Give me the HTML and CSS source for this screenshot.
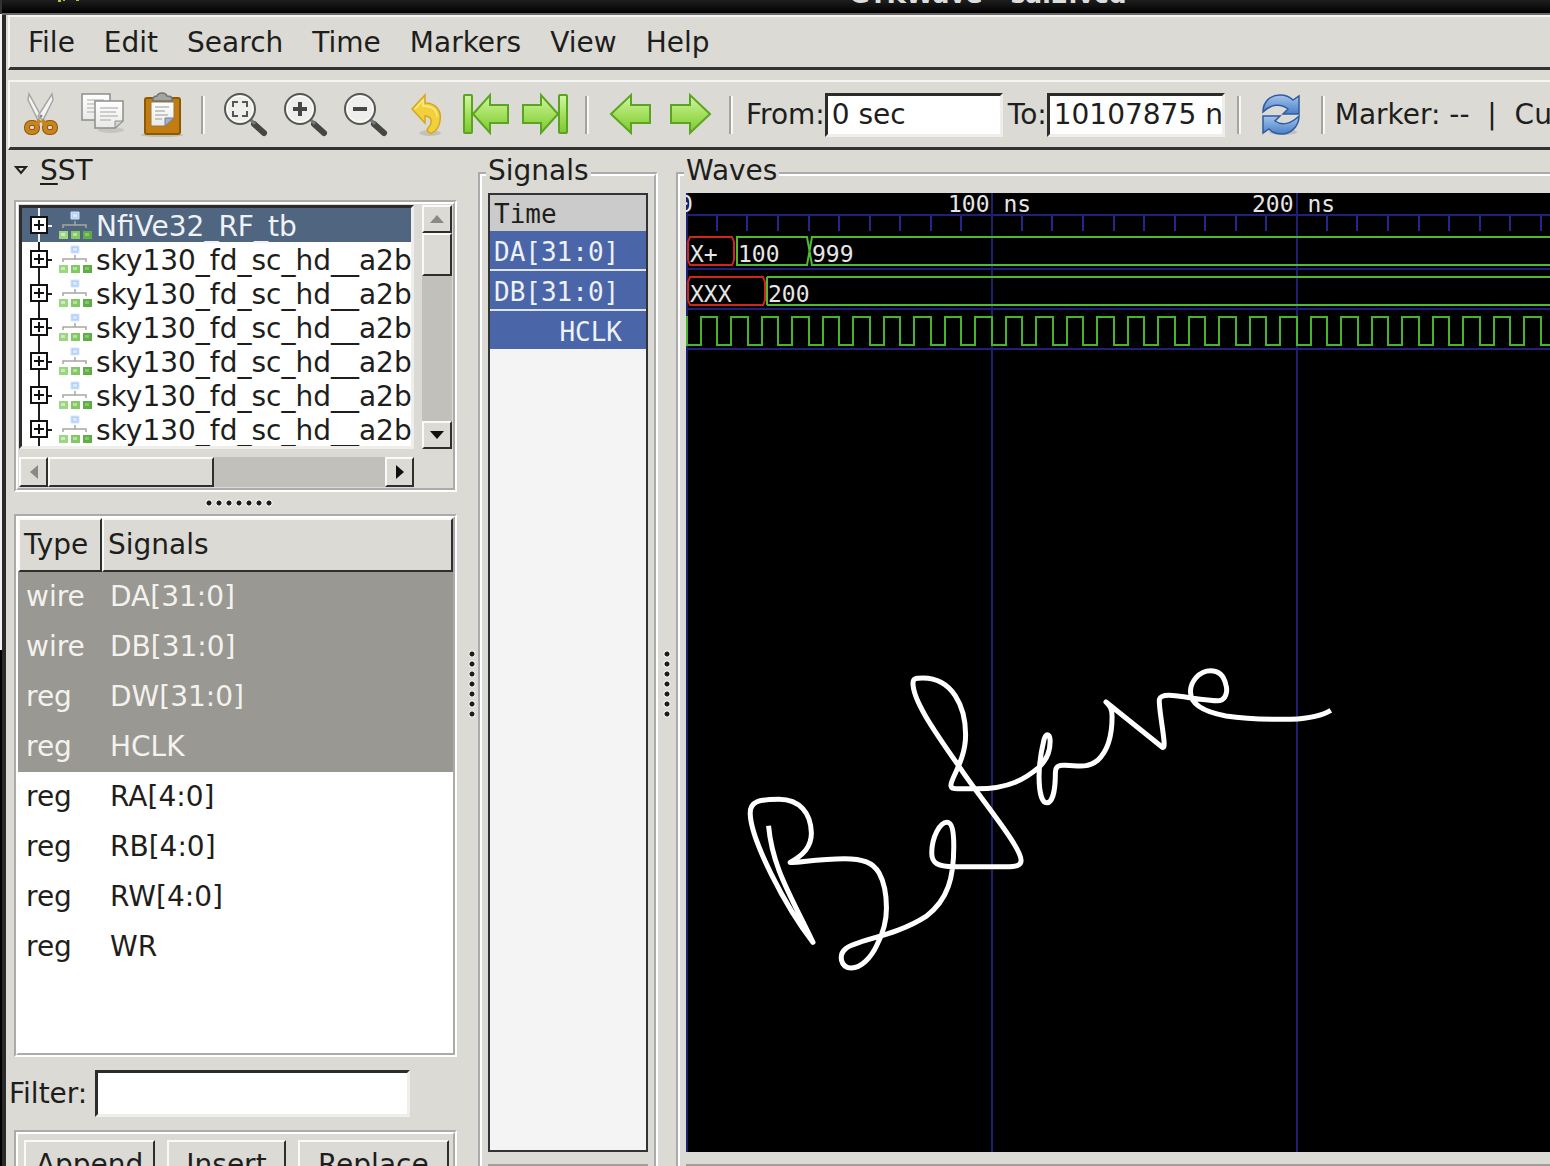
FILE: index.html
```html
<!DOCTYPE html>
<html lang="en">
<head>
<meta charset="utf-8">
<title>GTKWave - sal2.vcd</title>
<link rel="stylesheet" href="styles.css">
</head>
<body>
<svg class="defs" aria-hidden="true">
  <defs>
    <linearGradient id="green" x1="0" y1="0" x2="0" y2="1"><stop offset="0" stop-color="#d3f5a8"/><stop offset=".5" stop-color="#a5e05f"/><stop offset="1" stop-color="#7cc832"/></linearGradient>
    <linearGradient id="blue" x1="0" y1="0" x2="0" y2="1"><stop offset="0" stop-color="#a3c4ec"/><stop offset="1" stop-color="#4a80c8"/></linearGradient>
    <linearGradient id="paper" x1="0" y1="0" x2="0" y2="1"><stop offset="0" stop-color="#ffffff"/><stop offset="1" stop-color="#e9e9e7"/></linearGradient>
    <symbol id="node" viewBox="0 0 34 28">
      <path d="M13 1h8v7h-8z" fill="#b4d2f8" stroke="#d4e4fa"/>
      <path d="M15 3h4v3h-4z" fill="#d8e9ff"/>
      <path d="M5 17v-3h23v3M17 10v4" fill="none" stroke="#a9a6a0" stroke-width="1.500"/>
      <path d="M1 20h9v8H1z" fill="#9bd680"/><path d="M3 22h4v3H3z" fill="#c9edb8"/>
      <path d="M13 20h9v8h-9z" fill="#83c767"/><path d="M15 22h4v3h-4z" fill="#b4e39c"/>
      <path d="M25 20h9v8h-9z" fill="#5fae45"/><path d="M27 22h4v3h-4z" fill="#85c76b"/>
    </symbol>
    <symbol id="plus" viewBox="0 0 24 34">
      <path d="M10 0v34M18 18h5" stroke="currentColor" stroke-width="2"/>
      <path d="M2 9h16v16H2z" fill="#fff" stroke="#111" stroke-width="2"/>
      <path d="M5 17h10M10 12v10" stroke="#111" stroke-width="2"/>
    </symbol>
    <symbol id="lens" viewBox="0 0 48 48">
      <path d="M33 33l10 9" stroke="#454745" stroke-width="6" stroke-linecap="round"/>
      <path d="M29 28l5 5" stroke="#777" stroke-width="3"/>
      <circle cx="19" cy="18" r="15" fill="#eeeeec" stroke="#555753" stroke-width="2"/>
      <circle cx="19" cy="18" r="13" fill="none" stroke="#fff" stroke-width="1"/>
    </symbol>
  </defs>
</svg>
<div class="screen">
  <div class="desktop"></div>
  <div class="window">
    <header class="titlebar">
      <svg class="titleicon" width="24" height="3" aria-hidden="true"><path d="M0 0h3v2H0zM5 0h2v1H5zM18 0h3v1h-3z" fill="#a8c83c"/></svg>
      <span class="title">GTKWave - sal2.vcd</span>
    </header>
    <nav class="menubar" aria-label="Menu">
      <button>File</button><button>Edit</button><button>Search</button><button>Time</button><button>Markers</button><button>View</button><button>Help</button>
    </nav>
    <div class="toolbar">
      <button class="tool" aria-label="Cut"><svg width="48" height="48" viewBox="0 0 48 48"><path d="M12 3l-1 6 10 20 3-4z" fill="#f4f4f3" stroke="#a5a6a3" stroke-width="1.500"/><path d="M35 3l1 6-10 20-5-4z" fill="#f4f4f3" stroke="#a5a6a3" stroke-width="1.500"/><circle cx="24" cy="25" r="1.500" fill="#888"/><g fill="none" stroke="#8f5902" stroke-width="6"><rect x="10" y="32" width="10" height="9" rx="4"/><rect x="28" y="32" width="10" height="9" rx="4"/></g><g fill="none" stroke="#c88420" stroke-width="4"><path d="M19 34l4-5M29 34l-4-5"/><rect x="10" y="32" width="10" height="9" rx="4"/><rect x="28" y="32" width="10" height="9" rx="4"/></g></svg></button>
      <button class="tool" aria-label="Copy"><svg width="48" height="48" viewBox="0 0 48 48"><ellipse cx="34" cy="39" rx="13" ry="3" fill="#c6c5c0"/><path d="M5 3h28v26H5z" fill="url(#paper)" stroke="#8d8f8b" stroke-width="1.500"/><path d="M10 9h17M10 13h8M10 17h7M10 21h8" stroke="#c4c5c3" stroke-width="1.500"/><path d="M18 10h28v20l-8 7H18z" fill="url(#paper)" stroke="#8d8f8b" stroke-width="1.500"/><path d="M46 30l-8 7v-7z" fill="#d3d4d2" stroke="#8d8f8b"/><path d="M23 17h18M23 21h16M23 25h18M23 29h11" stroke="#bfc0be" stroke-width="1.500"/></svg></button>
      <button class="tool" aria-label="Paste"><svg width="48" height="48" viewBox="0 0 48 48"><ellipse cx="25" cy="44" rx="21" ry="2" fill="#bdbcb6"/><rect x="8" y="7" width="35" height="36" rx="2" fill="#c17d11" stroke="#8f5902" stroke-width="2"/><path d="M14 11h23v16l-9 8H14z" fill="url(#paper)" stroke="#9a7a40"/><path d="M37 27l-9 8v-8z" fill="#9fb0c8" stroke="#77808c"/><path d="M18 16h14M18 20h10M18 24h13M18 28h7" stroke="#b7b8b6" stroke-width="1.500"/><path d="M16 10V7q1-2 4-2 1-3 5-3t5 3q4 0 5 2v3z" fill="#a3a5a1" stroke="#72746f" stroke-width="1.500"/></svg></button>
      <span class="sep"></span>
      <button class="tool" aria-label="Zoom fit"><svg width="48" height="48"><use href="#lens"/><path d="M12 16v-5h5M21 11h5v5M26 20v5h-5M17 25h-5v-5" fill="none" stroke="#555753" stroke-width="2"/></svg></button>
      <button class="tool" aria-label="Zoom in"><svg width="48" height="48"><use href="#lens"/><path d="M12 18h14M19 11v14" stroke="#454745" stroke-width="4"/></svg></button>
      <button class="tool" aria-label="Zoom out"><svg width="48" height="48"><use href="#lens"/><path d="M12 18h14" stroke="#454745" stroke-width="4"/></svg></button>
      <button class="tool" aria-label="Undo"><svg width="48" height="48" viewBox="0 0 48 48"><ellipse cx="29" cy="42" rx="11" ry="3" fill="#c2c1ba"/><path d="M11 18L24 4v8c11 0 17 8 15 18-1 7-4 10-8 12-3 1-6-3-4-5 5-5 4-12-3-12v7z" fill="#f1d03c" stroke="#d3a820" stroke-width="1.500"/><path d="M14 18l8-9v6c9 0 14 4 14 11" fill="none" stroke="#fbeb8c" stroke-width="1.500"/></svg></button>
      <button class="tool" aria-label="Zoom to start"><svg width="48" height="48" viewBox="0 0 48 48"><g fill="url(#green)" stroke="#5aa51e" stroke-width="2"><rect x="3" y="4" width="8" height="38" rx="1"/><path d="M12 23L29 4v10h18v18H29v10z"/></g></svg></button>
      <button class="tool" aria-label="Zoom to end"><svg width="48" height="48" viewBox="0 0 48 48"><g fill="url(#green)" stroke="#5aa51e" stroke-width="2"><rect x="38" y="4" width="8" height="38" rx="1"/><path d="M37 23L20 4v10H2v18h18v10z"/></g></svg></button>
      <span class="sep"></span>
      <button class="tool" aria-label="Previous edge"><svg width="48" height="48" viewBox="0 0 48 48"><path d="M6 23L26 4v10h19v18H26v10z" fill="url(#green)" stroke="#5aa51e" stroke-width="2"/></svg></button>
      <button class="tool" aria-label="Next edge"><svg width="48" height="48" viewBox="0 0 48 48"><path d="M45 23L25 4v10H6v18h19v10z" fill="url(#green)" stroke="#5aa51e" stroke-width="2"/></svg></button>
      <span class="sep"></span>
      <label class="range" for="from">From:</label>
      <input class="entry time" id="from" type="text" value="0 sec">
      <label class="range to" for="to">To:</label>
      <input class="entry time" id="to" type="text" value="10107875 ns">
      <span class="sep reload"></span>
      <button class="tool" aria-label="Reload"><svg width="48" height="48" viewBox="0 0 48 48"><ellipse cx="26" cy="41" rx="14" ry="3" fill="#bfbeba"/><g fill="url(#blue)" stroke="#2f5c9e" stroke-width="1.500"><path d="M6 21C6 10 14 4 23 4c6 0 10 2 13 5l6-4v18H26l5-5c-7-6-17-5-25 3z"/><path d="M42 25c0 11-9 18-17 18-6 0-10-2-13-5l-6 4V25h17l-5 5c7 5 16 3 24-5z"/></g></svg></button>
      <span class="sep"></span>
      <span class="status">Marker: --  |  Cursor:</span>
    </div>
    <main class="panes">
      <section class="side">
        <button class="expander"><svg width="14" height="10" viewBox="0 0 14 10" aria-hidden="true"><path d="M2 1h10L7 7z" fill="none" stroke="#222" stroke-width="2"/></svg><span><u>S</u>ST</span></button>
        <div class="box sst">
          <ul class="tree">
            <li class="on"><svg class="tog" width="24" height="34"><use href="#plus"/></svg><svg width="34" height="28"><use href="#node"/></svg><span>NfiVe32_RF_tb</span></li>
            <li><svg class="tog" width="24" height="34"><use href="#plus"/></svg><svg width="34" height="28"><use href="#node"/></svg><span>sky130_fd_sc_hd__a2b</span></li>
            <li><svg class="tog" width="24" height="34"><use href="#plus"/></svg><svg width="34" height="28"><use href="#node"/></svg><span>sky130_fd_sc_hd__a2b</span></li>
            <li><svg class="tog" width="24" height="34"><use href="#plus"/></svg><svg width="34" height="28"><use href="#node"/></svg><span>sky130_fd_sc_hd__a2b</span></li>
            <li><svg class="tog" width="24" height="34"><use href="#plus"/></svg><svg width="34" height="28"><use href="#node"/></svg><span>sky130_fd_sc_hd__a2b</span></li>
            <li><svg class="tog" width="24" height="34"><use href="#plus"/></svg><svg width="34" height="28"><use href="#node"/></svg><span>sky130_fd_sc_hd__a2b</span></li>
            <li><svg class="tog" width="24" height="34"><use href="#plus"/></svg><svg width="34" height="28"><use href="#node"/></svg><span>sky130_fd_sc_hd__a2b</span></li>
          </ul>
          <div class="scroll vert">
            <button class="bevel" aria-label="Scroll up"><svg width="14" height="10"><path d="M0 9h14L7 1z" fill="#8a8984"/></svg></button>
            <div class="bevel thumb"></div><div class="track"></div>
            <button class="bevel" aria-label="Scroll down"><svg width="14" height="10"><path d="M0 1h14L7 9z" fill="#111"/></svg></button>
          </div>
          <div class="scroll horiz">
            <button class="bevel" aria-label="Scroll left"><svg width="10" height="14"><path d="M9 0v14L1 7z" fill="#8a8984"/></svg></button>
            <div class="bevel thumb"></div><div class="track"></div>
            <button class="bevel" aria-label="Scroll right"><svg width="10" height="14"><path d="M1 0v14l8-7z" fill="#111"/></svg></button>
          </div>
        </div>
        <div class="handle across"></div>
        <div class="box list">
          <table>
            <thead><tr><th class="type">Type</th><th>Signals</th></tr></thead>
            <tbody>
              <tr class="on"><td>wire</td><td>DA[31:0]</td></tr>
              <tr class="on"><td>wire</td><td>DB[31:0]</td></tr>
              <tr class="on"><td>reg</td><td>DW[31:0]</td></tr>
              <tr class="on"><td>reg</td><td>HCLK</td></tr>
              <tr><td>reg</td><td>RA[4:0]</td></tr>
              <tr><td>reg</td><td>RB[4:0]</td></tr>
              <tr><td>reg</td><td>RW[4:0]</td></tr>
              <tr><td>reg</td><td>WR</td></tr>
            </tbody>
          </table>
        </div>
        <div class="filter"><label for="filter">Filter:</label><input class="entry" id="filter" type="text"></div>
        <div class="box actions"><button class="bevel">Append</button><button class="bevel">Insert</button><button class="bevel">Replace</button></div>
      </section>
      <div class="handle down"></div>
      <fieldset class="pane">
        <legend>Signals</legend>
        <div class="names">
          <div class="head">Time</div><div class="sig">DA[31:0]</div><div class="sig">DB[31:0]</div><div class="sig last">HCLK</div>
        </div>
        <div class="stub"></div>
      </fieldset>
      <div class="handle down"></div>
      <fieldset class="pane waves">
        <legend>Waves</legend>
        <svg class="plot" role="img" aria-label="Waveforms with a handwritten note: Before">
          <defs>
            <pattern id="grid" width="305" height="2000" patternUnits="userSpaceOnUse"><path d="M0 0h2v2000H0z" fill="#1f1f72"/></pattern>
            <pattern id="ticks" width="305" height="60" patternUnits="userSpaceOnUse"><path d="M31 23v15M61 23v15M92 23v15M123 23v15M153 23v15M184 23v15M214 23v15M245 23v15M275 23v15" stroke="#25258a" stroke-width="2"/></pattern>
            <pattern id="clock" x="0" y="120" width="61" height="40" patternUnits="userSpaceOnUse"><path d="M1 3v29h14V4h16v28h14V4h16" fill="none" stroke="#47b52b" stroke-width="2"/></pattern>
          </defs>
          <rect width="100%" height="100%" fill="#000"/>
          <rect y="0" width="100%" height="60" fill="url(#ticks)"/>
          <g fill="#20207c"><rect y="21" width="100%" height="2"/><rect y="75" width="100%" height="2"/><rect y="115" width="100%" height="2"/><rect y="155" width="100%" height="2"/></g>
          <rect width="100%" height="100%" fill="url(#grid)"/>
          <rect y="120" width="100%" height="35" fill="url(#clock)"/>
          <g fill="none" stroke-width="2">
            <path d="M46 44H4L2 49v18l2 5h42l2-5V49zM77 84H4l-2 5v18l2 5h73l2-5V89z" stroke="#cf261c"/>
            <path d="M51 43v30M51 44h70l5 28M51 72h70l5-28" stroke="#4cbb2f"/>
          </g>
          <g fill="#4cbb2f"><rect x="125" y="43" width="100%" height="2"/><rect x="125" y="71" width="100%" height="2"/><rect x="81" y="83" width="100%" height="2"/><rect x="81" y="111" width="100%" height="2"/><rect x="80" y="84" width="2" height="28"/></g>
          <g class="vals">
            <text x="-7" y="19">0</text><text x="262" y="19">100 ns</text><text x="566" y="19">200 ns</text>
            <text x="4" y="69">X+</text><text x="52" y="69">100</text><text x="126" y="69">999</text>
            <text x="4" y="109">XXX</text><text x="82" y="109">200</text>
          </g>
          <path class="ink" transform="translate(34 447) scale(.408 .333)" d="M119 558C128 680 170 760 228 908C160 800 75 600 74 520C74 485 95 478 145 478C195 478 223 520 224 580C224 620 205 645 172 668C178 672 240 657 305 657C350 657 375 668 390 700C408 740 408 790 408 805C408 840 400 880 385 915C370 955 345 985 322 985C295 985 290 945 308 927C335 900 430 890 505 830C560 780 573 710 573 620C573 570 568 547 556 547C540 547 519 590 519 640C519 668 530 681 575 681L700 681C725 681 738 678 738 662C738 620 640 480 585 378C520 265 473 180 473 130C473 115 480 114 497 114C570 114 602 200 602 285C602 360 566 415 566 436C566 447 572 447 600 447L630 447C710 447 750 415 780 384C800 362 810 330 809 300C808 278 798 280 794 300C788 330 782 370 782 410C782 460 790 489 801 489C815 489 822 450 822 400C822 380 828 375 845 376C885 380 905 382 925 362C950 335 961 285 961 230C961 205 955 197 946 186L1085 323C1092 325 1087 290 1085 270C1080 225 1075 190 1077 178C1082 160 1110 165 1155 174C1190 180 1215 184 1225 182C1242 177 1244 150 1240 135C1235 105 1220 92 1202 92C1175 92 1153 125 1153 155C1153 190 1180 215 1240 228C1300 239 1350 239 1400 238C1445 235 1475 228 1497 211"/>
        </svg>
        <div class="stub"></div>
      </fieldset>
    </main>
  </div>
</div>
</body>
</html>
```
FILE: styles.css
```css
* { box-sizing: border-box; }
body {
  margin: 0;
  height: 100vh;
  overflow: hidden;
  background: #000;
  color: #1e1e1c;
  font: 28px/34px "DejaVu Sans", sans-serif;
}
button, input { font: inherit; color: inherit; }
button { padding: 0; border: 0; background: none; }
svg { display: block; flex: none; }
.defs { position: absolute; width: 0; height: 0; }

/* the window runs past the lower edge of the screen */
.screen { display: flex; height: calc(100vh + 40px); }
.desktop { width: 2px; background: linear-gradient(#333 14px, #f2f2f2 14px 650px, #000 650px); }
.window {
  flex: 1;
  min-width: 0;
  display: flex;
  flex-direction: column;
  border-left: 4px solid #2a2a2a;
  padding-left: 2px;
  background: #dbdad5;
}

.titlebar {
  flex: none;
  display: grid;
  grid-template: 13px / 1fr auto 1fr;
  align-items: end;
  height: 15px;
  margin-left: -6px;
  padding-left: 424px;
  overflow: hidden;
  border-bottom: 2px solid #6a6a68;
  background: linear-gradient(#1e1e1e, #000);
  color: #ddd;
  font-size: 25px;
  font-weight: bold;
  line-height: 36px;
}
.titleicon { align-self: start; margin-left: -368px; }

.menubar, .toolbar {
  flex: none;
  display: flex;
  align-items: center;
  border-top: 2px solid #f6f5f3;
  border-left: 2px solid #f6f5f3;
  border-bottom: 3px solid #333;
  overflow: hidden;
}
.menubar { height: 55px; padding: 1px 0 0 4px; gap: 1px; }
.menubar button { padding: 0 14px; }
.toolbar { height: 70px; margin-top: 10px; padding-left: 1px; }
.toolbar > * { flex: none; }
.tool { width: 60px; display: grid; place-items: center; }
.sep { width: 24px; height: 38px; display: flex; justify-content: center; }
.sep::before { content: ""; border-left: 2px solid #a5a49f; border-right: 2px solid #f8f7f5; }
.reload { margin-left: 2px; }
.range { padding-left: 3px; }
.to { padding-left: 5px; }
.entry {
  min-width: 0;
  border: 3px solid;
  border-color: #2c2c2a #efeeeb #efeeeb #2c2c2a;
  border-radius: 0;
  background: #fff;
  padding: 0 0 0 4px;
  outline: 0;
}
.time { width: 178px; height: 44px; }
.status { white-space: pre; }

.panes {
  flex: 1;
  min-height: 0;
  display: grid;
  grid-template-columns: 458px 12px 180px 18px minmax(0, 1fr);
  padding-top: 4px;
}
.side { display: flex; flex-direction: column; min-height: 0; padding: 0 9px 0 6px; }
.expander { display: flex; align-items: center; gap: 12px; height: 34px; margin-bottom: 12px; }
.expander u { text-decoration-thickness: 2px; text-underline-offset: 3px; }
.box { border: 4px groove #fff; }
.sst {
  display: grid;
  grid-template: 244px 30px / minmax(0, 1fr) 30px;
  gap: 8px;
  padding: 1px;
}
.tree {
  margin: 0;
  padding: 0;
  list-style: none;
  overflow: hidden;
  background: #fff;
  border: 3px solid;
  border-color: #2c2c2a #efeeeb #efeeeb #2c2c2a;
}
.tree li { display: flex; align-items: center; height: 34px; padding-left: 7px; white-space: nowrap; }
.tree .tog { margin-right: 5px; }
.tree span { padding: 3px 0 0 4px; }
.tree .on { background: #50657f; color: #eef2f6; }
.scroll { display: flex; background: #c1c0bb; }
.vert { flex-direction: column; }
.track { flex: 1; }
.bevel {
  border: 2px solid;
  border-color: #fbfaf8 #2e2e2c #2e2e2c #fbfaf8;
  background: #dbdad5;
}
.scroll button { display: grid; place-items: center; width: 29px; height: 28px; }
.scroll.vert button { width: 30px; }
.scroll.horiz button { height: 30px; }
.vert .thumb { height: 43px; }
.horiz .thumb { width: 166px; }

.handle { background: radial-gradient(circle, #1a1a1a 2px, #fbfaf8 3px, transparent 4px) center / 10px 10px; }
.across { width: 70px; height: 10px; margin: 6px 0 6px 190px; flex: none; }
.down { width: 10px; height: 70px; margin: 495px auto 0; }

.list { flex: 1; min-height: 0; overflow: hidden; background: #fff; }
table { width: 100%; border-collapse: separate; border-spacing: 0; table-layout: fixed; }
th {
  height: 54px;
  padding: 0 0 0 4px;
  text-align: left;
  font-weight: normal;
  background: #dbdad5;
  border: 2px solid;
  border-color: #fbfaf8 #2e2e2c #2e2e2c #fbfaf8;
}
.type { width: 84px; }
td { height: 50px; padding: 0 0 0 8px; }
tr.on td { background: #9a9892; color: #f3f2ef; }
.filter { display: flex; align-items: center; gap: 8px; margin: 13px 47px 13px -5px; height: 47px; flex: none; }
.filter .entry { flex: 1; height: 47px; }
.actions {
  flex: none;
  display: grid;
  grid-template-columns: 131fr 118fr 151fr;
  gap: 12px;
  height: 76px;
  padding: 6px 4px 13px 6px;
}

.pane {
  display: flex;
  flex-direction: column;
  min-width: 0;
  min-height: 0;
  margin: 0;
  padding: 0 6px 12px;
  border: 4px groove #fff;
}
.pane legend { margin-left: -2px; padding: 0 2px 5px; }
.waves { padding-right: 0; border-right: 0; }
.names {
  flex: 1;
  border: 2px solid #333;
  background: #f4f4f4;
  font: 26px/36px "DejaVu Sans Mono", monospace;
}
.head { height: 36px; padding: 1px 4px 0; background: #cbcbcb; }
.sig { height: 40px; padding: 3px 4px 0; background: #4a66a8; color: #eef1f8; border-bottom: 2px solid #dfe4f2; }
.last { height: 38px; padding-right: 24px; border: 0; text-align: right; }
.stub { flex: none; height: 26px; margin-top: 12px; border-top: 2px solid #a09f9a; background: #c1c0bb; }
.plot { flex: 1; width: 100%; min-height: 0; overflow: hidden; }
.vals { fill: #e6e6e6; font: 23px "DejaVu Sans Mono", monospace; white-space: pre; }
.ink { fill: none; stroke: #fff; stroke-width: 5; stroke-linejoin: round; vector-effect: non-scaling-stroke; }
```
